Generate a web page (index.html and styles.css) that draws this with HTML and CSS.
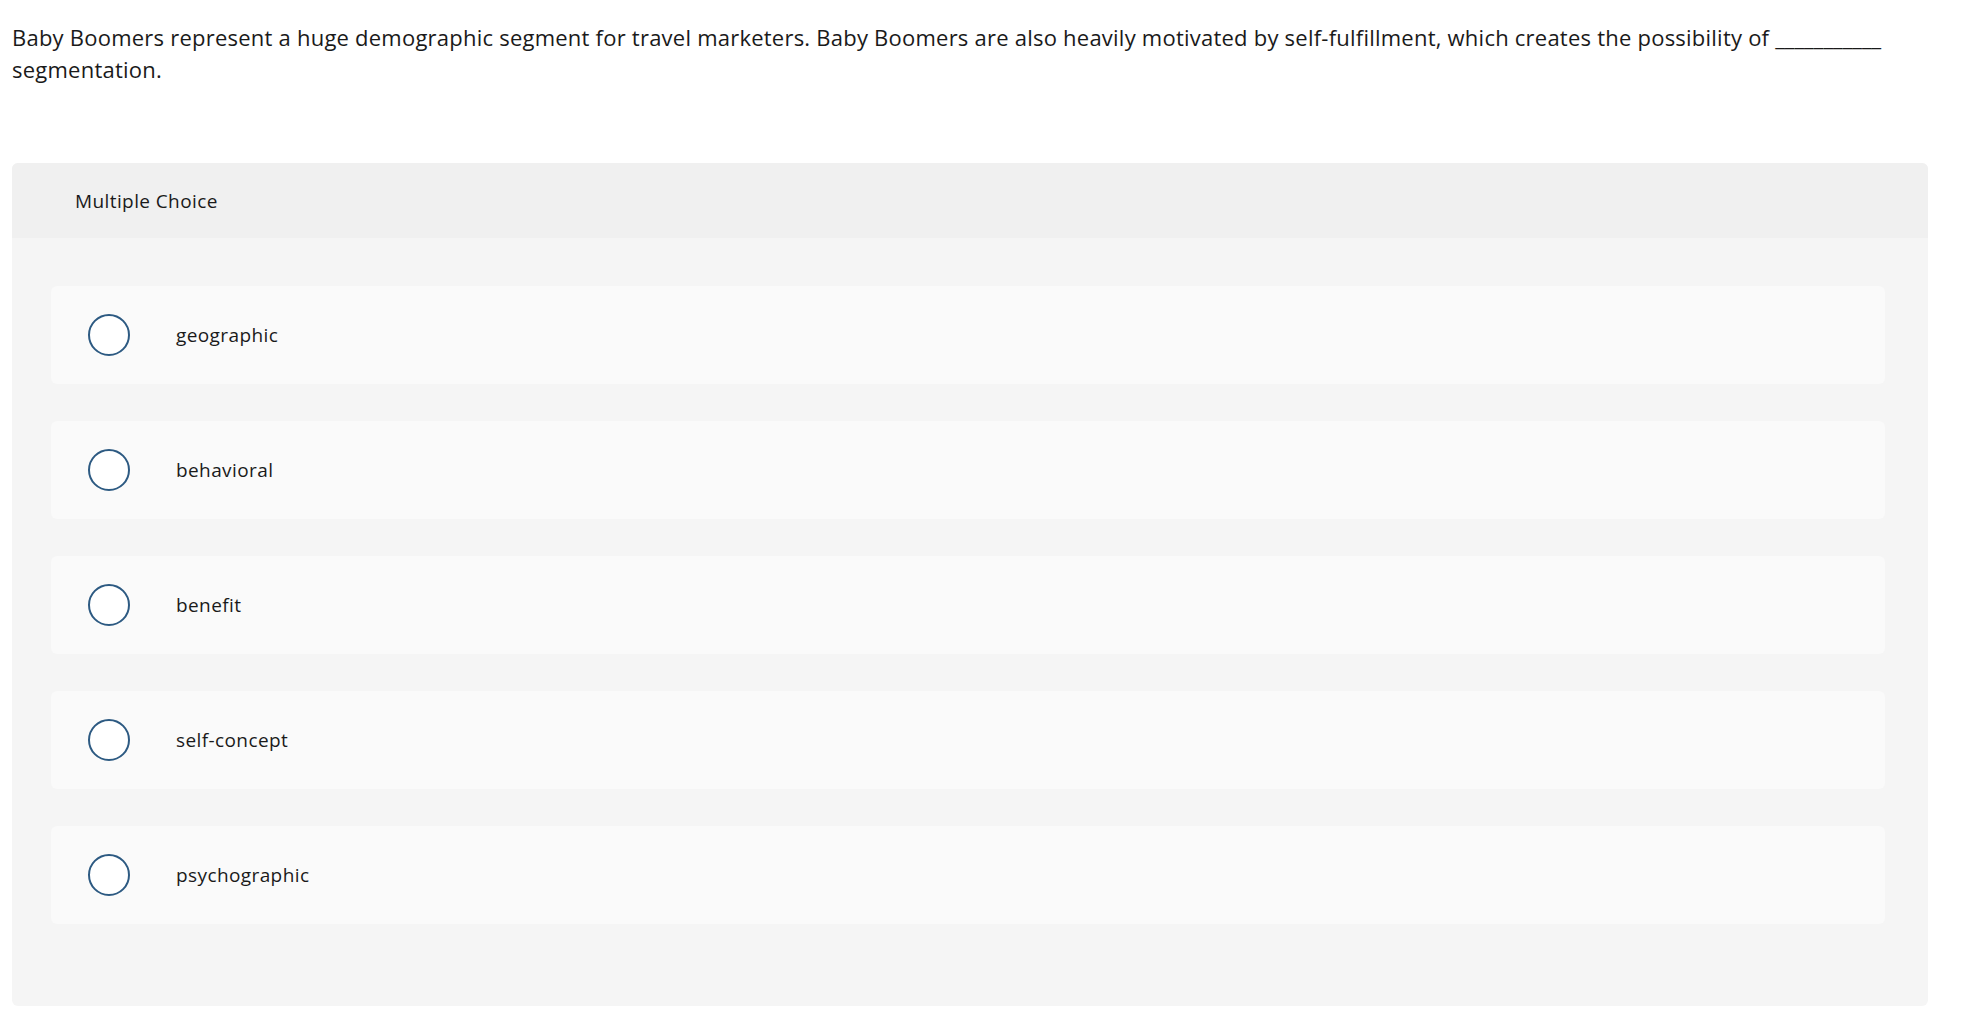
FILE: index.html
```html
<!DOCTYPE html>
<html lang="en">
<head>
<meta charset="utf-8">
<title>Multiple Choice</title>
<link rel="stylesheet" href="styles.css">
</head>
<body>
<div class="page">
  <p class="question">Baby Boomers represent a huge demographic segment for travel marketers. Baby Boomers are also heavily motivated by self-fulfillment, which creates the possibility of <span class="blank">___________</span> segmentation.</p>
  <section class="panel">
    <header class="panel-header">Multiple Choice</header>
    <div class="panel-body">
      <label class="option"><span class="radio"></span><span class="option-text">geographic</span></label>
      <label class="option"><span class="radio"></span><span class="option-text">behavioral</span></label>
      <label class="option"><span class="radio"></span><span class="option-text">benefit</span></label>
      <label class="option"><span class="radio"></span><span class="option-text">self-concept</span></label>
      <label class="option"><span class="radio"></span><span class="option-text">psychographic</span></label>
    </div>
  </section>
</div>
</body>
</html>
```

FILE: styles.css
```css
html, body {
  margin: 0;
  padding: 0;
  background: #ffffff;
}
body {
  font-family: "Open Sans", Lato, "Liberation Sans", sans-serif;
  color: #1a1a1a;
}
.page {
  padding: 0 38px 0 12px;
}
.question {
  margin: 0;
  padding-top: 21px;
  font-size: 22px;
  line-height: 32px;
  letter-spacing: 0.23px;
}
.blank {
  letter-spacing: 0;
}
.panel {
  margin-top: 78px;
  border-radius: 6px;
  background: #f5f5f5;
  overflow: hidden;
}
.panel-header {
  height: 75px;
  background: #f0f0f0;
  display: flex;
  align-items: center;
  padding-left: 63px;
  font-size: 19px;
  letter-spacing: 0.4px;
}
.panel-body {
  display: flex;
  flex-direction: column;
  gap: 37px;
  padding: 48px 43px 82px 39px;
}
.option {
  display: flex;
  align-items: center;
  height: 98px;
  background: #fafafa;
  border-radius: 6px;
  padding-left: 37px;
  box-sizing: border-box;
}
.radio {
  width: 42px;
  height: 42px;
  box-sizing: border-box;
  border: 2px solid #2d5a82;
  border-radius: 50%;
  background: #ffffff;
  flex: none;
}
.option-text {
  margin-left: 46px;
  font-size: 19px;
  letter-spacing: 0.4px;
}
```
